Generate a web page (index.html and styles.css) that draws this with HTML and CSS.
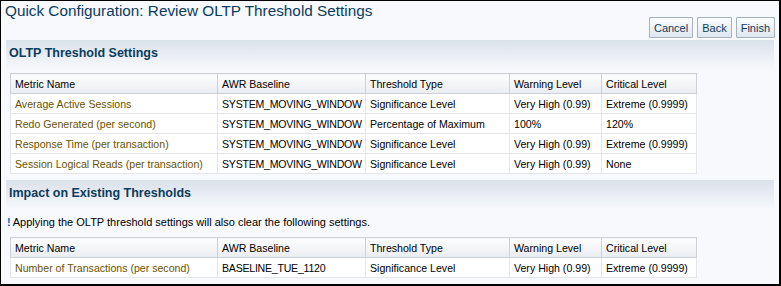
FILE: index.html
```html
<!DOCTYPE html>
<html lang="en">
<head>
    <meta charset="UTF-8">
    <title>Quick Configuration: Review OLTP Threshold Settings</title>
    <link rel="stylesheet" href="styles.css">
</head>
<body>
    <div class="frame">
        <h1 class="page-title">Quick Configuration: Review OLTP Threshold Settings</h1>
        <div class="actions">
            <button class="btn">Cancel</button>
            <button class="btn">Back</button>
            <button class="btn">Finish</button>
        </div>

        <h2 class="section-head">OLTP Threshold Settings</h2>
        <table class="grid">
            <tr>
                <th class="c1">Metric Name</th>
                <th class="c2">AWR Baseline</th>
                <th class="c3">Threshold Type</th>
                <th class="c4">Warning Level</th>
                <th class="c5">Critical Level</th>
            </tr>
            <tr>
                <td><a href="#">Average Active Sessions</a></td>
                <td>SYSTEM_MOVING_WINDOW</td>
                <td>Significance Level</td>
                <td>Very High (0.99)</td>
                <td>Extreme (0.9999)</td>
            </tr>
            <tr>
                <td><a href="#">Redo Generated (per second)</a></td>
                <td>SYSTEM_MOVING_WINDOW</td>
                <td>Percentage of Maximum</td>
                <td>100%</td>
                <td>120%</td>
            </tr>
            <tr>
                <td><a href="#">Response Time (per transaction)</a></td>
                <td>SYSTEM_MOVING_WINDOW</td>
                <td>Significance Level</td>
                <td>Very High (0.99)</td>
                <td>Extreme (0.9999)</td>
            </tr>
            <tr>
                <td><a href="#">Session Logical Reads (per transaction)</a></td>
                <td>SYSTEM_MOVING_WINDOW</td>
                <td>Significance Level</td>
                <td>Very High (0.99)</td>
                <td>None</td>
            </tr>
        </table>

        <h2 class="section-head second">Impact on Existing Thresholds</h2>
        <p class="note"><span class="bang">!</span>Applying the OLTP threshold settings will also clear the following settings.</p>
        <table class="grid">
            <tr>
                <th class="c1">Metric Name</th>
                <th class="c2">AWR Baseline</th>
                <th class="c3">Threshold Type</th>
                <th class="c4">Warning Level</th>
                <th class="c5">Critical Level</th>
            </tr>
            <tr>
                <td><a href="#">Number of Transactions (per second)</a></td>
                <td>BASELINE_TUE_1120</td>
                <td>Significance Level</td>
                <td>Very High (0.99)</td>
                <td>Extreme (0.9999)</td>
            </tr>
        </table>
    </div>
</body>
</html>
```

FILE: styles.css
```css
html, body {
    margin: 0;
    padding: 0;
}
body {
    font-family: Tahoma, "Liberation Sans", sans-serif;
    font-size: 11px;
    background: #fff;
}
.frame {
    width: 778px;
    height: 283px;
    border: 1px solid #000;
    border-right-width: 2px;
    border-bottom-width: 2px;
    background: #f7f9fc;
    overflow: hidden;
}
.page-title {
    margin: 0;
    padding: 1px 0 0 4px;
    font-size: 15.3px;
    font-weight: normal;
    color: #0b3c5d;
    line-height: 18px;
}
.actions {
    display: flex;
    justify-content: flex-end;
    gap: 4px;
    padding: 0 4px 0 0;
    margin-top: -3px;
}
.btn {
    font-family: inherit;
    font-size: 11px;
    color: #0b3c5d;
    height: 21px;
    padding: 0 4px;
    border: 1px solid #a7b1bd;
    background: linear-gradient(#fdfefe, #dfe6ef);
    border-radius: 1px;
}
.section-head {
    margin: 2px 5px 0 5px;
    padding: 6px 3px 0;
    height: 27px;
    font-size: 12.5px;
    font-weight: bold;
    color: #0b3c5d;
    background: linear-gradient(#dbe1ea, #f7f9fc 90%);
}
.section-head.second {
    margin-top: 6px;
}
.grid {
    margin-left: 9px;
    width: 687px;
    table-layout: fixed;
    border-collapse: collapse;
    background: #fff;
    font-size: 10.6px;
}
.grid th, .grid td {
    height: 19px;
    padding: 0 3px 0 4px;
    text-align: left;
    font-weight: normal;
    white-space: nowrap;
    overflow: hidden;
    color: #000;
}
.grid td {
    border: 1px solid #e3e5e8;
}
.grid td:nth-child(2) {
    letter-spacing: -0.25px;
}
.grid th {
    background: linear-gradient(#fdfdfe, #eaedf1);
    border: 1px solid #cdd1d6;
    border-left-color: #9ea4ab;
}
.grid th.c1 {
    border-left-color: #cdd1d6;
}
.c1 { width: 199px; }
.c2 { width: 140px; }
.c3 { width: 136px; }
.c4 { width: 84px; }
.c5 { width: 87px; }
.grid a {
    color: #6b5200;
    text-decoration: none;
}
.note {
    margin: 0;
    padding: 2px 0 8px 6px;
    line-height: 14px;
}
.bang {
    color: #0066cc;
    font-weight: bold;
    padding-right: 2px;
}
```
